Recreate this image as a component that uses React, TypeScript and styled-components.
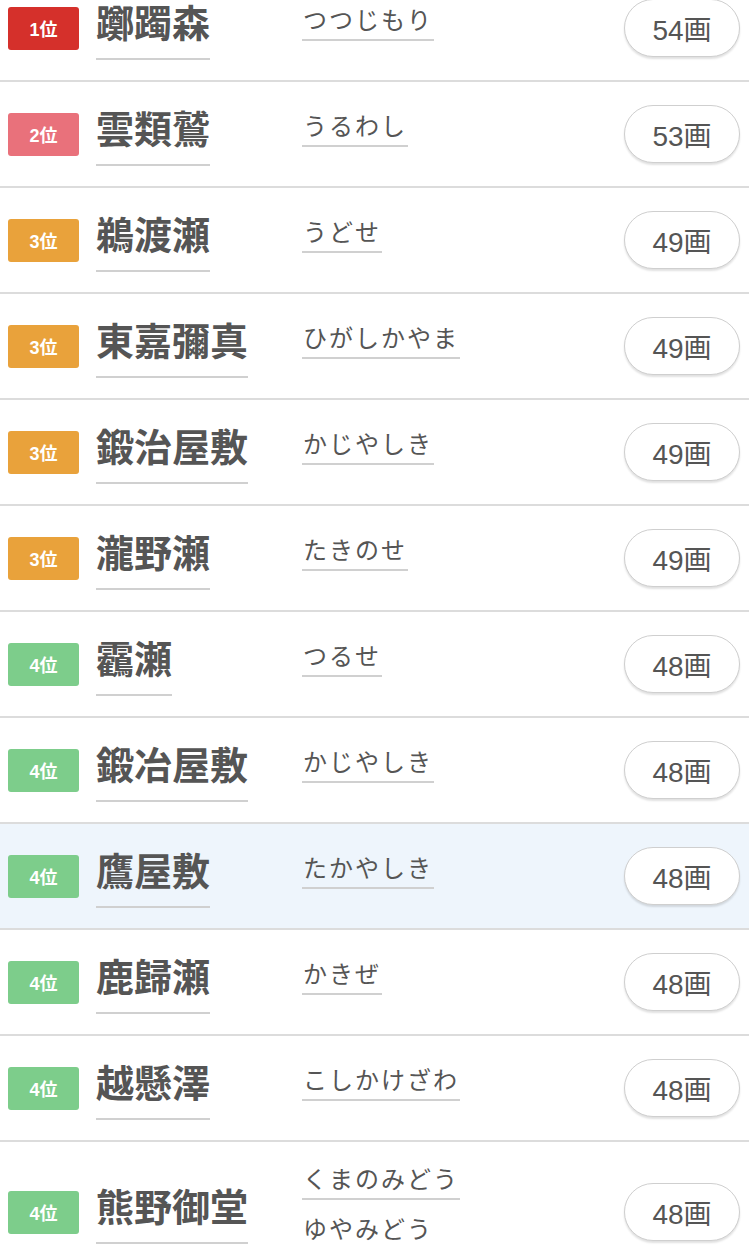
import styled, { createGlobalStyle } from 'styled-components';

const GlobalStyle = createGlobalStyle`
  body {
    margin: 0;
    background: #fff;
    font-family: "Liberation Sans", "Noto Sans CJK JP", sans-serif;
    color: #555;
  }
`;

const List = styled.ul`
  list-style: none;
  margin: -24px 0 0;
  padding: 0;
`;

const Row = styled.li<{ $active?: boolean }>`
  display: flex;
  align-items: center;
  min-height: 64px;
  padding: 20px 9px 20px 8px;
  border-bottom: 2px solid #dcdcdc;
  background: ${(p) => (p.$active ? '#eef5fc' : '#fff')};
`;

const rankColors: Record<number, string> = {
  1: '#d5302b',
  2: '#e9717b',
  3: '#e9a23b',
  4: '#7dcd8b',
};

const Badge = styled.span<{ $rank: number }>`
  flex: none;
  display: flex;
  align-items: center;
  justify-content: center;
  width: 71px;
  height: 43px;
  border-radius: 3px;
  background: ${(p) => rankColors[p.$rank]};
  color: #fff;
  font-size: 18px;
  font-weight: bold;
`;

const NameCol = styled.div`
  flex: none;
  width: 206px;
  margin-left: 17px;
`;

const Name = styled.span`
  display: inline-block;
  margin-top: 2px;
  padding-bottom: 15px;
  border-bottom: 2px solid #d0d0d0;
  font-family: "Noto Sans CJK JP", sans-serif;
  font-size: 38px;
  font-weight: bold;
  line-height: 44px;
  color: #555;
`;

const Readings = styled.div`
  flex: 1;
  display: flex;
  flex-direction: column;
  align-items: flex-start;
`;

const Reading = styled.span`
  display: inline-block;
  margin: 1px 0 12px;
  padding: 0 1px 5px;
  border-bottom: 2px solid #d0d0d0;
  font-family: "Noto Sans CJK JP", sans-serif;
  font-size: 24px;
  letter-spacing: 2px;
  line-height: 30px;
  color: #555;
`;

const Count = styled.span`
  flex: none;
  display: flex;
  align-items: center;
  justify-content: center;
  box-sizing: border-box;
  width: 116px;
  height: 58px;
  border: 1.5px solid #cfcfcf;
  border-radius: 29px;
  background: #fff;
  box-shadow: 0 2px 2px rgba(0, 0, 0, 0.12);
  font-size: 28px;
  color: #555;
`;

type Entry = { rank: number; name: string; readings: string[]; strokes: number; active?: boolean };

const entries: Entry[] = [
  { rank: 1, name: '躑躅森', readings: ['つつじもり'], strokes: 54 },
  { rank: 2, name: '雲類鷲', readings: ['うるわし'], strokes: 53 },
  { rank: 3, name: '鵜渡瀬', readings: ['うどせ'], strokes: 49 },
  { rank: 3, name: '東嘉彌真', readings: ['ひがしかやま'], strokes: 49 },
  { rank: 3, name: '鍛治屋敷', readings: ['かじやしき'], strokes: 49 },
  { rank: 3, name: '瀧野瀬', readings: ['たきのせ'], strokes: 49 },
  { rank: 4, name: '靏瀬', readings: ['つるせ'], strokes: 48 },
  { rank: 4, name: '鍛冶屋敷', readings: ['かじやしき'], strokes: 48 },
  { rank: 4, name: '鷹屋敷', readings: ['たかやしき'], strokes: 48, active: true },
  { rank: 4, name: '鹿歸瀬', readings: ['かきぜ'], strokes: 48 },
  { rank: 4, name: '越懸澤', readings: ['こしかけざわ'], strokes: 48 },
  { rank: 4, name: '熊野御堂', readings: ['くまのみどう', 'ゆやみどう'], strokes: 48 },
];

export default function App() {
  return (
    <>
      <GlobalStyle />
      <List>
        {entries.map((e, i) => (
          <Row key={i} $active={e.active}>
            <Badge $rank={e.rank}>{e.rank}位</Badge>
            <NameCol>
              <Name>{e.name}</Name>
            </NameCol>
            <Readings>
              {e.readings.map((r) => (
                <Reading key={r}>{r}</Reading>
              ))}
            </Readings>
            <Count>{e.strokes}画</Count>
          </Row>
        ))}
      </List>
    </>
  );
}
